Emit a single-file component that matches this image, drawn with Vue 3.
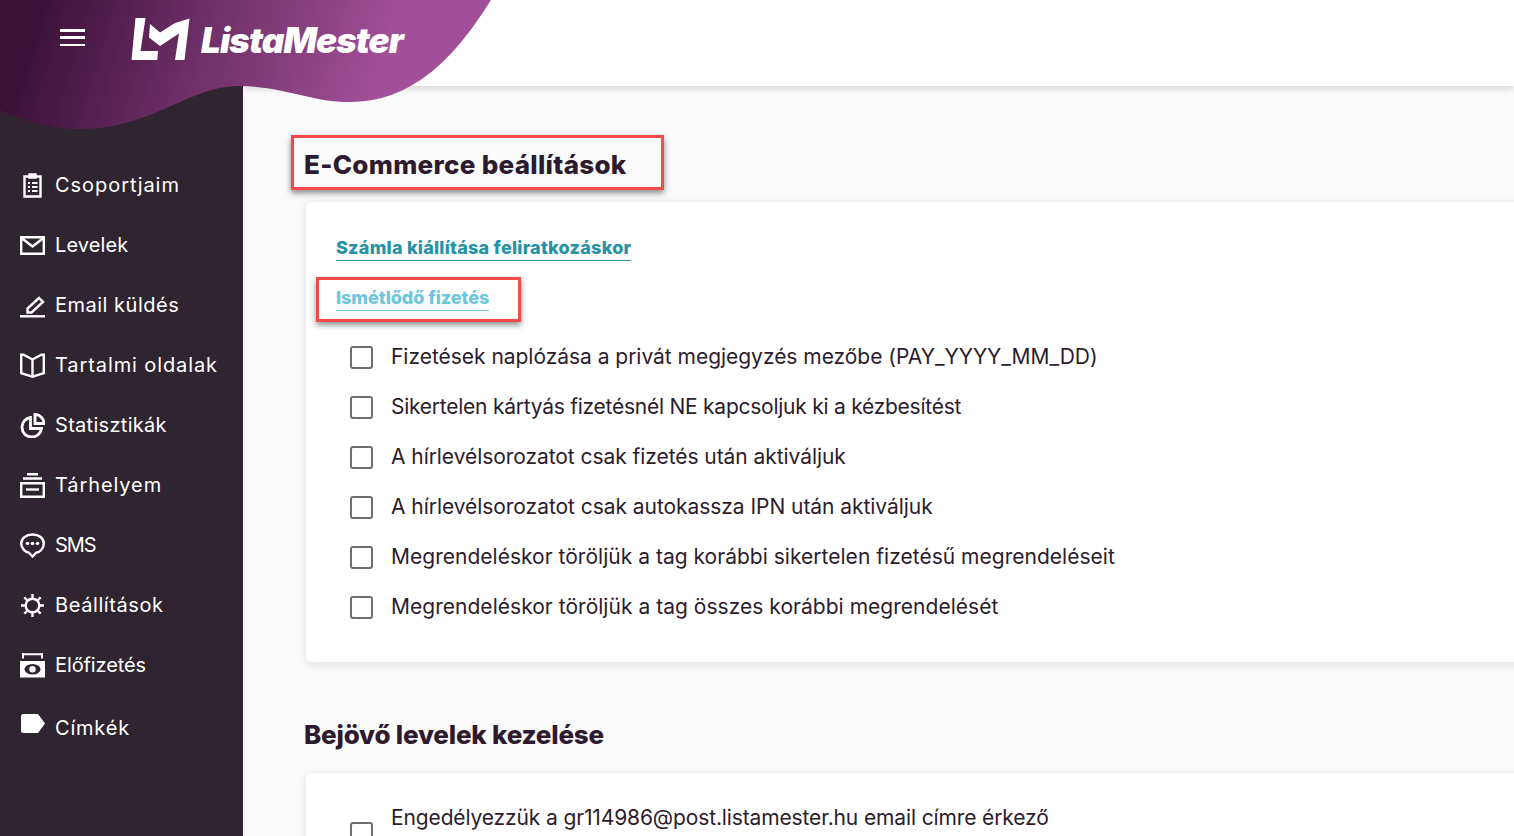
<script setup>
const navItems = [
  { label: 'Csoportjaim', icon: 'clipboard', spacing: 0.95 },
  { label: 'Levelek', icon: 'mail', spacing: 0.1 },
  { label: 'Email küldés', icon: 'pen', spacing: 0.5 },
  { label: 'Tartalmi oldalak', icon: 'book', spacing: 0.9 },
  { label: 'Statisztikák', icon: 'pie', spacing: 0.3 },
  { label: 'Tárhelyem', icon: 'archive', spacing: 0.9 },
  { label: 'SMS', icon: 'chat', spacing: -1.1 },
  { label: 'Beállítások', icon: 'gear', spacing: 0.6 },
  { label: 'Előfizetés', icon: 'money', spacing: -0.1 },
  { label: 'Címkék', icon: 'tag', spacing: 0.8 }
]
const options = [
  { text: 'Fizetések naplózása a privát megjegyzés mezőbe (PAY_YYYY_MM_DD)', spacing: -0.03 },
  { text: 'Sikertelen kártyás fizetésnél NE kapcsoljuk ki a kézbesítést', spacing: -0.25 },
  { text: 'A hírlevélsorozatot csak fizetés után aktiváljuk', spacing: -0.06 },
  { text: 'A hírlevélsorozatot csak autokassza IPN után aktiváljuk', spacing: -0.05 },
  { text: 'Megrendeléskor töröljük a tag korábbi sikertelen fizetésű megrendeléseit', spacing: 0.02 },
  { text: 'Megrendeléskor töröljük a tag összes korábbi megrendelését', spacing: 0.03 }
]
</script>

<template>
  <div class="app">
    <aside class="sidebar">
      <nav class="nav">
        <a v-for="item in navItems" :key="item.label" class="nav-item" :class="{ last: item.icon === 'tag' }">
          <svg class="icon" viewBox="0 0 25 25" fill="none" stroke="#fff" stroke-width="2.4">
            <template v-if="item.icon === 'clipboard'">
              <path d="M4.500 3.500h16v20h-16z" />
              <path d="M9 1h7v4H9z" fill="#fff" stroke-width="1.4" />
              <path d="M8 10h2M12 10h5.500M8 14h2M12 14h5.500M8 18h2M12 18h5.500" stroke-width="2" />
            </template>
            <template v-else-if="item.icon === 'mail'">
              <path d="M1.200 4.200h22.600v16.600H1.200z" />
              <path d="M1.500 5l11 8.500 11-8.500" />
            </template>
            <template v-else-if="item.icon === 'pen'">
              <path d="M7.500 15.500v4h4L23 9l-4-4z" />
              <path d="M0 23.300h25" />
            </template>
            <template v-else-if="item.icon === 'book'">
              <path d="M12.500 6.500L3.500 1.800H1.200v18.400l11.300 3.500 11.300-3.500V1.800h-2.300z" />
              <path d="M12.500 6.500v17" />
            </template>
            <template v-else-if="item.icon === 'pie'">
              <path d="M10.500 4.500a9.800 9.800 0 1 0 11 11H10.500z" stroke-width="2.800" />
              <path d="M15 1.500a9 9 0 0 1 9 9h-9z" stroke-width="2.800" />
            </template>
            <template v-else-if="item.icon === 'archive'">
              <path d="M1.200 10.200h22.600v13.600H1.200z" />
              <path d="M6 16.500h13" />
              <path d="M3 5.500h19M7 1.200h11" />
            </template>
            <template v-else-if="item.icon === 'chat'">
              <path d="M12.500 1.500C6 1.500 1.200 5.500 1.200 10.500s4.500 9 7.800 9.300l3.500 3.700 3.500-3.700c3.500-.3 7.800-4 7.800-9.300S19 1.500 12.500 1.500z" />
              <circle cx="7.500" cy="10.500" r="1.800" fill="#fff" stroke="none" />
              <circle cx="12.500" cy="10.500" r="1.800" fill="#fff" stroke="none" />
              <circle cx="17.500" cy="10.500" r="1.800" fill="#fff" stroke="none" />
            </template>
            <template v-else-if="item.icon === 'gear'">
              <circle cx="12.500" cy="12.500" r="6.800" stroke-width="2.400" />
              <path d="M12.500 1v4.500M12.500 19.500V24M1 12.500h4.500M19.500 12.500H24M4.300 4.300l3.200 3.200M17.500 17.500l3.200 3.200M20.700 4.300l-3.200 3.200M7.500 17.500l-3.200 3.200" stroke-width="2.400" />
            </template>
            <template v-else-if="item.icon === 'money'">
              <path d="M3 1.200h19M3 0v5.500M22 0v5.500" stroke-width="2" />
              <path d="M0 8h25v16.500H0z" fill="#fff" stroke="none" />
              <ellipse cx="12.500" cy="16.200" rx="8" ry="5.200" fill="#2f2530" stroke="none" />
              <circle cx="12.500" cy="16.200" r="3.200" fill="#fff" stroke="none" />
            </template>
            <template v-else>
              <path d="M3.500 1h14.500l7 9.500-7 9.500H3.500Q1 20 1 17.500v-14Q1 1 3.500 1z" fill="#fff" stroke="none" />
            </template>
          </svg>
          <span :style="{ letterSpacing: item.spacing + 'px' }">{{ item.label }}</span>
        </a>
      </nav>
    </aside>

    <div class="right">
      <header class="topbar"></header>
      <main class="content">
        <section class="section first">
          <h2 class="heading wide">E-Commerce beállítások</h2>
          <div class="card">
            <div class="tabs">
              <div class="tab-row"><a class="tab active">Számla kiállítása feliratkozáskor</a></div>
              <div class="tab-row"><a class="tab light">Ismétlődő fizetés</a></div>
            </div>
            <label v-for="option in options" :key="option.text" class="option">
              <span class="box"></span>
              <span class="text" :style="{ letterSpacing: option.spacing + 'px' }">{{ option.text }}</span>
            </label>
          </div>
        </section>
        <section class="section">
          <h2 class="heading lower">Bejövő levelek kezelése</h2>
          <div class="card second">
            <label class="option wrap">
              <span class="box"></span>
              <span class="text">Engedélyezzük a gr114986@post.listamester.hu email címre érkező</span>
            </label>
          </div>
        </section>
      </main>
    </div>

    <svg class="blob" viewBox="0 0 500 135" width="500" height="135">
      <defs>
        <linearGradient id="blobFill" gradientUnits="userSpaceOnUse" x1="35" y1="10" x2="370" y2="110">
          <stop offset="0" stop-color="#3b1138" />
          <stop offset="0.5" stop-color="#703068" />
          <stop offset="1" stop-color="#a14f98" />
        </linearGradient>
      </defs>
      <path d="M0 0H491C462 46 420 102 350 102C310 102 285 86 238 86C190 86 150 129 82 129C50 129 22 121 0 110Z" fill="url(#blobFill)" />
    </svg>

    <button class="menu" aria-label="Menü">
      <span></span><span></span><span></span>
    </button>

    <div class="logo">
      <svg viewBox="0 0 60 45" width="60" height="45">
        <path d="M4.500 0H14.500L9.500 33H27L26.300 42H0.500Z" fill="#fff" />
        <path d="M19 6L29 14.500L44 5L58.500 0.500L53.500 42H44L48 15.500L29 28L18 19.500Z" fill="#fff" />
      </svg>
      <span class="logo-text">ListaMester</span>
    </div>

    <div class="mark mark-title"></div>
    <div class="mark mark-tab"></div>
  </div>
</template>

<style>
html, body { margin: 0; overflow: hidden; }
</style>

<style scoped>
.app {
  position: relative;
  display: flex;
  width: 1514px;
  height: 836px;
  overflow: hidden;
  font-family: Inter, "Open Sans", sans-serif;
  color: #2c1c2c;
  background: #fafafa;
}
.sidebar {
  flex: 0 0 243px;
  background: #2f2530;
  padding-top: 155px;
  box-sizing: border-box;
}
.nav { display: flex; flex-direction: column; }
.nav-item {
  display: flex;
  align-items: center;
  gap: 10px;
  height: 60px;
  padding-left: 20px;
  color: #fff;
  font-size: 20px;
}
.nav-item.last { margin-top: 3px; }
.nav-item.last .icon { margin-top: -6px; }
.icon { width: 25px; height: 25px; flex: none; }
.right { flex: 1; min-width: 0; display: flex; flex-direction: column; }
.topbar {
  flex: 0 0 86px;
  background: #fff;
  box-shadow: 0 3px 7px rgba(0, 0, 0, 0.14);
}
.content { flex: 1; padding: 59px 0 0 61px; }
.section.first { margin-bottom: 53px; }
.heading {
  margin: 0 0 17px;
  font-size: 26px;
  line-height: 40px;
  font-weight: 800;
  color: #2e1a2e;
  letter-spacing: -0.2px;
}
.heading.wide { letter-spacing: 0.3px; }
.heading.lower { margin-bottom: 18px; }
.card {
  margin: 0 -30px 0 2px;
  height: 460px;
  box-sizing: border-box;
  background: #fff;
  border-radius: 6px;
  padding: 21px 30px 0;
  box-shadow: 0 2px 10px rgba(0, 0, 0, 0.12);
}
.card.second { height: 200px; padding-top: 30px; }
.tabs { margin-bottom: 9px; }
.tab-row { height: 50px; display: flex; align-items: center; }
.tab {
  font-size: 18px;
  font-weight: 800;
  line-height: 25px;
  border-bottom: 1px solid currentColor;
}
.tab.active { color: #2592a6; letter-spacing: 0.24px; }
.tab.light { color: #6cc6dc; letter-spacing: -0.05px; }
.option {
  display: flex;
  align-items: center;
  height: 50px;
  padding-left: 14px;
}
.option.wrap { align-items: flex-start; height: 60px; }
.option.wrap .box { margin-top: 19px; }
.option.wrap .text { line-height: 30px; letter-spacing: -0.13px; }
.box {
  flex: none;
  width: 19px;
  height: 19px;
  margin-right: 18px;
  border: 2px solid #6e6e6e;
  border-radius: 3px;
  background: #fff;
}
.text { font-size: 21px; line-height: 38px; color: #2c1c2c; }
.blob { position: absolute; left: 0; top: 0; }
.menu {
  position: absolute;
  left: 60px;
  top: 29px;
  width: 25px;
  height: 17px;
  padding: 0;
  border: 0;
  background: none;
  display: flex;
  flex-direction: column;
  justify-content: space-between;
}
.menu span { display: block; height: 2.500px; background: #fff; }
.logo {
  position: absolute;
  left: 131px;
  top: 18px;
  display: flex;
  align-items: center;
  gap: 10px;
  color: #fff;
}
.logo-text {
  font-family: Inter, Roboto, sans-serif;
  font-size: 35px;
  font-weight: 900;
  font-style: italic;
  line-height: 44px;
  letter-spacing: -0.9px;
  margin-bottom: 1px;
}
.mark {
  position: absolute;
  box-sizing: border-box;
  border: 3px solid #f44a4a;
  box-shadow: 0 3px 6px rgba(0, 0, 0, 0.45);
}
.mark-title { left: 291px; top: 135px; width: 373px; height: 55px; }
.mark-tab { left: 316px; top: 277px; width: 205px; height: 45px; }
</style>
